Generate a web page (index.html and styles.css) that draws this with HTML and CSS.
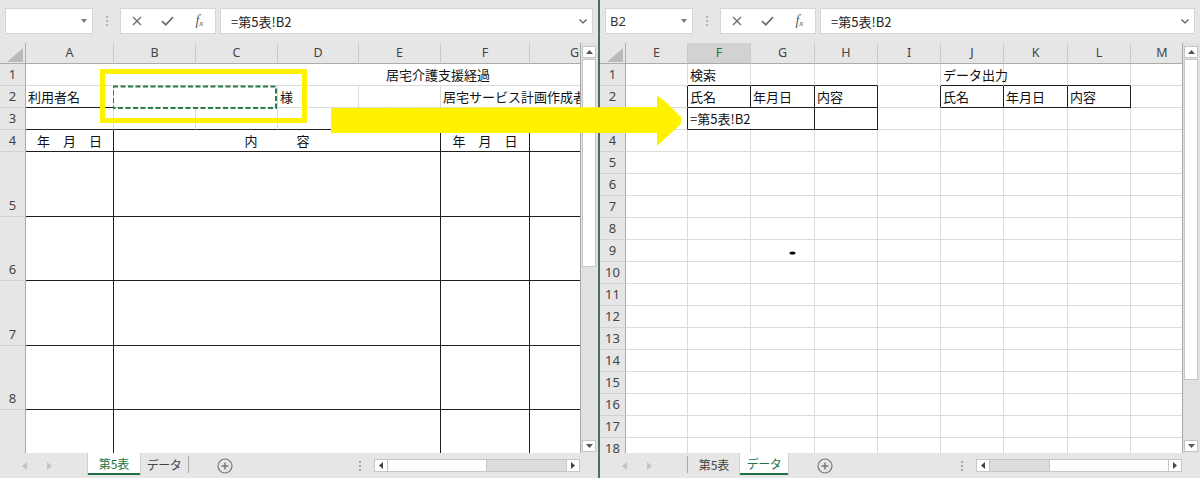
FILE: index.html
```html
<!DOCTYPE html>
<html lang="ja">
<head>
<meta charset="utf-8">
<title>Excel</title>
<link rel="stylesheet" href="styles.css">
</head>
<body>
<div class="app">
  <!-- LEFT WINDOW -->
  <section class="win win-l">
    <div class="fbar">
      <div class="namebox"><span class="nb-text"></span><svg class="dd" width="6" height="4" viewBox="0 0 6 4"><path d="M0 0H6L3 4Z" fill="#777"/></svg></div>
      <div class="grip"><i></i><i></i><i></i></div>
      <div class="fxbox">
        <span><svg width="10" height="10" viewBox="0 0 10 10"><path d="M1 1L9 9M9 1L1 9" stroke="#6b6b6b" stroke-width="1.3" fill="none"/></svg></span>
        <span><svg width="13" height="10" viewBox="0 0 13 10"><path d="M1 5.2L4.8 8.8L12 1.2" stroke="#6b6b6b" stroke-width="1.7" fill="none"/></svg></span>
        <span class="fx"><em>f</em><small>x</small></span>
      </div>
      <div class="formula"><span>=第5表!B2</span><svg width="8" height="5" viewBox="0 0 8 5"><path d="M0.5 0.5L4 4L7.5 0.5" stroke="#555" stroke-width="1.2" fill="none"/></svg></div>
    </div>
    <div class="sheetarea">
      <div class="viewport">
        <div class="grid grid-l">
          <div class="corner"></div>
          <div class="ch">A</div><div class="ch">B</div><div class="ch">C</div><div class="ch">D</div><div class="ch">E</div><div class="ch">F</div><div class="ch">G</div>

          <div class="rh">1</div>
          <div class="c s7 title">居宅介護支援経過</div>

          <div class="rh">2</div>
          <div class="c bb">利用者名</div>
          <div class="c s2 marq-cell"><svg class="marq" width="166" height="25" viewBox="0 0 166 25"><rect x="0" y="1.5" width="163" height="21.5" fill="none" stroke="#2b7a4b" stroke-width="2" stroke-dasharray="5 2.5"/></svg></div>
          <div class="c">様</div>
          <div class="c"></div>
          <div class="c s2">居宅サービス計画作成者</div>

          <div class="rh">3</div>
          <div class="c bb"></div><div class="c bb"></div><div class="c bb"></div><div class="c bb"></div><div class="c bb"></div><div class="c bb"></div><div class="c bb"></div>

          <div class="rh">4</div>
          <div class="c bb br ctr">年　月　日</div>
          <div class="c s4 bb br ctr">内　　　容</div>
          <div class="c bb br ctr">年　月　日</div>
          <div class="c bb"></div>

          <div class="rh tall"><span>5</span></div>
          <div class="c bb br"></div><div class="c s4 bb br"></div><div class="c bb br"></div><div class="c bb"></div>
          <div class="rh tall"><span>6</span></div>
          <div class="c bb br"></div><div class="c s4 bb br"></div><div class="c bb br"></div><div class="c bb"></div>
          <div class="rh tall"><span>7</span></div>
          <div class="c bb br"></div><div class="c s4 bb br"></div><div class="c bb br"></div><div class="c bb"></div>
          <div class="rh tall"><span>8</span></div>
          <div class="c bb br"></div><div class="c s4 bb br"></div><div class="c bb br"></div><div class="c bb"></div>
          <div class="rh tall"><span>9</span></div>
          <div class="c br"></div><div class="c s4 br"></div><div class="c br"></div><div class="c"></div>
        </div>
      </div>
      <div class="vscroll">
        <div class="vbtn"><svg width="7" height="4" viewBox="0 0 7 4"><path d="M0 4H7L3.5 0Z" fill="#555"/></svg></div>
        <div class="vthumb vthumb-l"></div>
        <div class="vtrack"></div>
        <div class="vbtn"><svg width="7" height="4" viewBox="0 0 7 4"><path d="M0 0H7L3.5 4Z" fill="#555"/></svg></div>
      </div>
    </div>
    <div class="tabbar">
      <div class="nav">
        <svg width="5" height="8" viewBox="0 0 5 8"><path d="M5 0V8L0 4Z" fill="#c3c3c3"/></svg>
        <svg width="5" height="8" viewBox="0 0 5 8"><path d="M0 0V8L5 4Z" fill="#c3c3c3"/></svg>
      </div>
      <div class="tab t1 on">第5表</div>
      <div class="tab t2">データ</div>
      <div class="tsep"></div>
      <div class="plus"><svg width="16" height="16" viewBox="0 0 16 16"><circle cx="8" cy="8" r="7" fill="none" stroke="#777" stroke-width="1.2"/><path d="M8 4.5V11.5M4.5 8H11.5" stroke="#777" stroke-width="1.5"/></svg></div>
      <div class="spacer"></div>
      <div class="hdots"><i></i><i></i><i></i></div>
      <div class="hscroll">
        <div class="hbtn"><svg width="4" height="7" viewBox="0 0 4 7"><path d="M4 0V7L0 3.5Z" fill="#444"/></svg></div>
        <div class="hthumb hthumb-l"></div>
        <div class="htrack"></div>
        <div class="hbtn hbtn-r"><svg width="4" height="7" viewBox="0 0 4 7"><path d="M0 0V7L4 3.5Z" fill="#444"/></svg></div>
      </div>
    </div>
  </section>

  <div class="divider"></div>

  <!-- RIGHT WINDOW -->
  <section class="win win-r">
    <div class="fbar">
      <div class="namebox"><span class="nb-text">B2</span><svg class="dd" width="6" height="4" viewBox="0 0 6 4"><path d="M0 0H6L3 4Z" fill="#777"/></svg></div>
      <div class="grip"><i></i><i></i><i></i></div>
      <div class="fxbox">
        <span><svg width="10" height="10" viewBox="0 0 10 10"><path d="M1 1L9 9M9 1L1 9" stroke="#6b6b6b" stroke-width="1.3" fill="none"/></svg></span>
        <span><svg width="13" height="10" viewBox="0 0 13 10"><path d="M1 5.2L4.8 8.8L12 1.2" stroke="#6b6b6b" stroke-width="1.7" fill="none"/></svg></span>
        <span class="fx"><em>f</em><small>x</small></span>
      </div>
      <div class="formula"><span>=第5表!B2</span><svg width="8" height="5" viewBox="0 0 8 5"><path d="M0.5 0.5L4 4L7.5 0.5" stroke="#555" stroke-width="1.2" fill="none"/></svg></div>
    </div>
    <div class="sheetarea">
      <div class="viewport">
        <div class="grid grid-r">
          <div class="corner"></div>
          <div class="ch">E</div><div class="ch sel">F</div><div class="ch">G</div><div class="ch">H</div><div class="ch">I</div><div class="ch">J</div><div class="ch">K</div><div class="ch">L</div><div class="ch">M</div>

          <div class="rh">1</div>
          <div class="c"></div><div class="c bb">検索</div><div class="c bb"></div><div class="c bb"></div><div class="c"></div><div class="c bb ov">データ出力</div><div class="c bb"></div><div class="c bb"></div><div class="c"></div>

          <div class="rh">2</div>
          <div class="c br"></div><div class="c bb br">氏名</div><div class="c bb br">年月日</div><div class="c bb br">内容</div><div class="c br"></div><div class="c bb br">氏名</div><div class="c bb br">年月日</div><div class="c bb br">内容</div><div class="c"></div>

          <div class="rh selr">3</div>
          <div class="c br"></div><div class="c s2 bb br">=第5表!B2</div><div class="c bb br"></div><div class="c"></div><div class="c"></div><div class="c"></div><div class="c"></div><div class="c"></div>

          <div class="rh">4</div><div class="c"></div><div class="c"></div><div class="c"></div><div class="c"></div><div class="c"></div><div class="c"></div><div class="c"></div><div class="c"></div><div class="c"></div>
          <div class="rh">5</div><div class="c"></div><div class="c"></div><div class="c"></div><div class="c"></div><div class="c"></div><div class="c"></div><div class="c"></div><div class="c"></div><div class="c"></div>
          <div class="rh">6</div><div class="c"></div><div class="c"></div><div class="c"></div><div class="c"></div><div class="c"></div><div class="c"></div><div class="c"></div><div class="c"></div><div class="c"></div>
          <div class="rh">7</div><div class="c"></div><div class="c"></div><div class="c"></div><div class="c"></div><div class="c"></div><div class="c"></div><div class="c"></div><div class="c"></div><div class="c"></div>
          <div class="rh">8</div><div class="c"></div><div class="c"></div><div class="c"></div><div class="c"></div><div class="c"></div><div class="c"></div><div class="c"></div><div class="c"></div><div class="c"></div>
          <div class="rh">9</div><div class="c"></div><div class="c"></div><div class="c"></div><div class="c"></div><div class="c"></div><div class="c"></div><div class="c"></div><div class="c"></div><div class="c"></div>
          <div class="rh">10</div><div class="c"></div><div class="c"></div><div class="c"></div><div class="c"></div><div class="c"></div><div class="c"></div><div class="c"></div><div class="c"></div><div class="c"></div>
          <div class="rh">11</div><div class="c"></div><div class="c"></div><div class="c"></div><div class="c"></div><div class="c"></div><div class="c"></div><div class="c"></div><div class="c"></div><div class="c"></div>
          <div class="rh">12</div><div class="c"></div><div class="c"></div><div class="c"></div><div class="c"></div><div class="c"></div><div class="c"></div><div class="c"></div><div class="c"></div><div class="c"></div>
          <div class="rh">13</div><div class="c"></div><div class="c"></div><div class="c"></div><div class="c"></div><div class="c"></div><div class="c"></div><div class="c"></div><div class="c"></div><div class="c"></div>
          <div class="rh">14</div><div class="c"></div><div class="c"></div><div class="c"></div><div class="c"></div><div class="c"></div><div class="c"></div><div class="c"></div><div class="c"></div><div class="c"></div>
          <div class="rh">15</div><div class="c"></div><div class="c"></div><div class="c"></div><div class="c"></div><div class="c"></div><div class="c"></div><div class="c"></div><div class="c"></div><div class="c"></div>
          <div class="rh">16</div><div class="c"></div><div class="c"></div><div class="c"></div><div class="c"></div><div class="c"></div><div class="c"></div><div class="c"></div><div class="c"></div><div class="c"></div>
          <div class="rh">17</div><div class="c"></div><div class="c"></div><div class="c"></div><div class="c"></div><div class="c"></div><div class="c"></div><div class="c"></div><div class="c"></div><div class="c"></div>
          <div class="rh">18</div><div class="c"></div><div class="c"></div><div class="c"></div><div class="c"></div><div class="c"></div><div class="c"></div><div class="c"></div><div class="c"></div><div class="c"></div>
        </div>
      </div>
      <div class="vscroll">
        <div class="vbtn"><svg width="7" height="4" viewBox="0 0 7 4"><path d="M0 4H7L3.5 0Z" fill="#555"/></svg></div>
        <div class="vthumb vthumb-r"></div>
        <div class="vtrack"></div>
        <div class="vbtn"><svg width="7" height="4" viewBox="0 0 7 4"><path d="M0 0H7L3.5 4Z" fill="#555"/></svg></div>
      </div>
    </div>
    <div class="tabbar">
      <div class="nav nav-r">
        <svg width="5" height="8" viewBox="0 0 5 8"><path d="M5 0V8L0 4Z" fill="#c3c3c3"/></svg>
        <svg width="5" height="8" viewBox="0 0 5 8"><path d="M0 0V8L5 4Z" fill="#c3c3c3"/></svg>
      </div>
      <div class="tsep"></div>
      <div class="tab t1">第5表</div>
      <div class="tab t2 on">データ</div>
      <div class="plus plus-r"><svg width="16" height="16" viewBox="0 0 16 16"><circle cx="8" cy="8" r="7" fill="none" stroke="#777" stroke-width="1.2"/><path d="M8 4.5V11.5M4.5 8H11.5" stroke="#777" stroke-width="1.5"/></svg></div>
      <div class="spacer"></div>
      <div class="hdots"><i></i><i></i><i></i></div>
      <div class="hscroll">
        <div class="hbtn"><svg width="4" height="7" viewBox="0 0 4 7"><path d="M4 0V7L0 3.5Z" fill="#444"/></svg></div>
        <div class="htrack"></div>
        <div class="hthumb hthumb-r"></div>
        <div class="hbtn hbtn-r"><svg width="4" height="7" viewBox="0 0 4 7"><path d="M0 0V7L4 3.5Z" fill="#444"/></svg></div>
      </div>
    </div>
  </section>

  <!-- annotation overlay -->
  <svg class="overlay" width="1200" height="478" viewBox="0 0 1200 478">
    <rect x="102.5" y="71.5" width="202" height="49" fill="none" stroke="#fff200" stroke-width="5"/>
    <path d="M331 108L657 107L657 95L668 104L681 117L681 124L668 136L657 146L657 133L331 133Z" fill="#fff200"/>
    <ellipse cx="792.5" cy="253" rx="3" ry="1.6" fill="#000"/>
  </svg>
</div>
</body>
</html>
```
FILE: styles.css
```css
* { box-sizing: border-box; }
html, body { margin: 0; padding: 0; }
body {
  width: 1200px;
  height: 478px;
  overflow: hidden;
  background: #e6e6e6;
  font-family: "Noto Sans", "Noto Sans CJK JP", sans-serif;
  color: #222;
}
.app { position: relative; display: flex; width: 1200px; height: 478px; }
.win { display: flex; flex-direction: column; height: 478px; background: #e6e6e6; }
.win-l { width: 598px; }
.win-r { width: 600px; }
.divider { width: 2px; background: #46705a; }

/* formula bar */
.fbar { height: 43px; flex: none; display: flex; align-items: flex-start; padding: 8px 5px 0 5px; }
.namebox {
  width: 88px; height: 26px; background: #fff; border: 1px solid #d6d6d6;
  display: flex; align-items: center; justify-content: space-between;
  padding: 0 5px 0 4px; font-size: 13px; color: #333;
}
.grip { width: 27px; height: 26px; display: flex; flex-direction: column; align-items: center; justify-content: center; gap: 2px; }
.grip i { display: block; width: 2px; height: 2px; background: #b5b5b5; }
.fxbox { width: 96px; height: 26px; background: #fff; border: 1px solid #d6d6d6; display: flex; }
.fxbox span { width: 32px; display: flex; align-items: center; justify-content: center; }
.fx { font-family: "Liberation Serif", serif; color: #5a5a5a; }
.fx em { font-size: 14px; font-style: italic; }
.fx small { font-size: 9px; font-style: italic; margin-top: 4px; margin-left: 0; }
.formula {
  flex: 1; margin-left: 4px; height: 26px; background: #fff; border: 1px solid #d6d6d6;
  display: flex; align-items: center; justify-content: space-between;
  padding: 0 5px 0 10px; font-family: "Noto Sans CJK JP", sans-serif; font-size: 13px; color: #222;
}

/* sheet */
.sheetarea { height: 410px; flex: none; display: flex; }
.viewport { flex: 1; overflow: hidden; background: #fff; position: relative; }
.grid { display: grid; width: max-content; font-family: "Noto Sans CJK JP", sans-serif; font-size: 13px; }
.grid-l {
  grid-template-columns: 26px 88px 82px 82px 81px 82px 89px 90px;
  grid-template-rows: 21px 22px 22px 22px 22px 65px 64px 65px 64px 64px;
}
.grid-r {
  grid-template-columns: 26px 62px 63px 64px 63px 63px 63px 64px 63px 63px;
  grid-template-rows: 21px repeat(18, 22px);
}
.c {
  border-right: 1px solid #dadada; border-bottom: 1px solid #dadada;
  padding: 0 2px; line-height: 21px; white-space: nowrap; overflow: hidden; color: #111;
}
.c.ov { overflow: visible; }
.bb { border-bottom-color: #1e1e1e; }
.br { border-right-color: #1e1e1e; }
.ctr { text-align: center; }
.s2 { grid-column: span 2; }
.s4 { grid-column: span 4; }
.s7 { grid-column: span 7; }
.title { padding-left: 360px; }
.marq-cell { position: relative; overflow: visible; }
.marq { position: absolute; left: -1px; top: -1px; }

.ch {
  background: #e6e6e6; border-right: 1px solid #cacaca; border-bottom: 1px solid #ababab;
  font-family: "Noto Sans", sans-serif; font-size: 12.5px; color: #444; text-align: center; line-height: 20px;
}
.ch.sel { background: #d2d2d2; color: #217346; }
.corner { background: #e6e6e6; border-right: 1px solid #ababab; border-bottom: 1px solid #ababab; position: relative; }
.corner::after {
  content: ""; position: absolute; left: 7px; top: 5px; width: 16px; height: 14px;
  background: #b9b9b9; clip-path: polygon(100% 0, 100% 100%, 0 100%);
}
.rh {
  background: #e6e6e6; border-right: 1px solid #ababab; border-bottom: 1px solid #d2d2d2;
  font-family: "Noto Sans", sans-serif; font-size: 13px; color: #444; text-align: center; line-height: 21px;
}
.rh.selr { background: #d2d2d2; color: #217346; }
.rh.tall { display: flex; align-items: flex-end; justify-content: center; }

/* vertical scrollbar */
.vscroll {
  width: 18px; flex: none; background: #e1e1e1; border-left: 1px solid #a8a8a8;
  padding: 3px 2px 1px 1px; display: flex; flex-direction: column;
}
.vbtn { height: 12px; flex: none; background: #fff; border: 1px solid #c6c6c6; display: flex; align-items: center; justify-content: center; }
.vthumb { flex: none; margin-top: 1px; background: #fff; border: 1px solid #c6c6c6; }
.vthumb-l { height: 208px; }
.vthumb-r { height: 321px; }
.vtrack { flex: 1; }

/* tabs */
.tabbar { height: 25px; flex: none; display: flex; align-items: flex-start; }
.nav { width: 88px; height: 25px; flex: none; display: flex; align-items: center; padding-left: 22px; gap: 20px; }
.nav-r { width: 87px; }
.tab {
  height: 22px; flex: none; display: flex; align-items: center; justify-content: center;
  font-family: "Noto Sans CJK JP", sans-serif; font-size: 12px; font-feature-settings: "palt"; color: #444;
}
.t1 { width: 52px; }
.t2 { width: 48px; }
.tab.on { background: #fff; color: #217346; border-bottom: 2px solid #217346; box-shadow: 1px 0 0 #cfcfcf, -1px 0 0 #cfcfcf; }
.tsep { width: 1px; height: 17px; margin-top: 3px; background: #a9a9a9; flex: none; }
.plus { width: 72px; height: 25px; flex: none; display: flex; align-items: center; justify-content: center; }
.plus-r { width: 73px; }
.spacer { flex: 1; }
.hdots { width: 14px; height: 25px; margin-right: 7px; display: flex; flex-direction: column; align-items: center; justify-content: center; gap: 2px; }
.hdots i { display: block; width: 2px; height: 2px; background: #a8a8a8; }
.hscroll {
  width: 206px; height: 13px; margin-top: 6px; margin-right: 18px; flex: none;
  border: 1px solid #c6c6c6; background: #dcdcdc; display: flex;
}
.hbtn { width: 13px; flex: none; background: #fff; border-right: 1px solid #c6c6c6; display: flex; align-items: center; justify-content: center; }
.hbtn-r { border-right: none; border-left: 1px solid #c6c6c6; }
.hthumb { flex: none; background: #fff; border-right: 1px solid #c6c6c6; }
.hthumb-l { width: 99px; }
.hthumb-r { width: 119px; border-left: 1px solid #c6c6c6; border-right: none; }
.htrack { flex: 1; }

/* annotations */
.overlay { position: absolute; left: 0; top: 0; pointer-events: none; }
```
